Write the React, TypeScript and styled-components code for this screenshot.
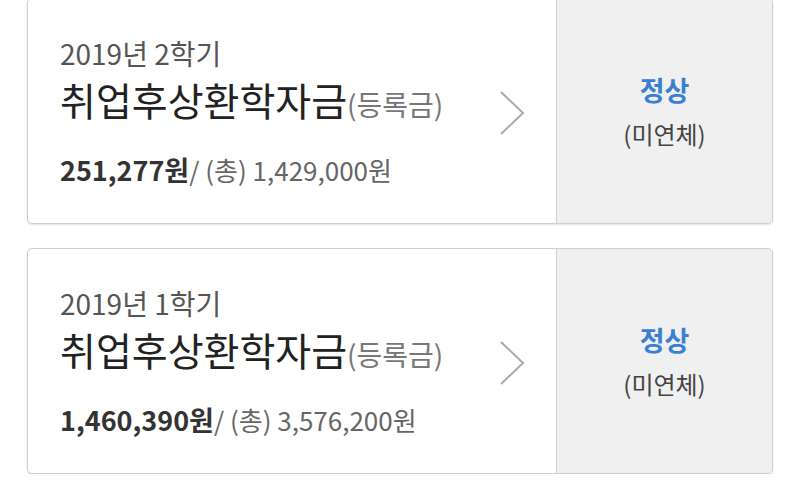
import React from 'react';
import styled, { createGlobalStyle } from 'styled-components';

const GlobalStyle = createGlobalStyle`
  html, body {
    margin: 0;
    padding: 0;
    background: #fff;
    font-family: "Noto Sans CJK KR", "Noto Sans", sans-serif;
  }
`;

const List = styled.div`
  display: flex;
  flex-direction: column;
  gap: 24px;
  padding: 0 27px;
  margin-top: -2px;
`;

const Card = styled.div`
  display: flex;
  height: 226px;
  box-sizing: border-box;
  border: 1px solid #cfcfcf;
  border-radius: 5px;
  overflow: hidden;
  box-shadow: 0 1px 2px rgba(0, 0, 0, 0.12);
  background: #fff;
`;

const Main = styled.div`
  flex: 1;
  display: flex;
  align-items: center;
  padding-left: 32px;
  padding-right: 31px;
`;

const Info = styled.div`
  flex: 1;
  display: flex;
  flex-direction: column;
`;

const Term = styled.div`
  font-size: 28px;
  line-height: 36px;
  color: #555;
`;

const Title = styled.div`
  font-size: 39px;
  line-height: 52px;
  color: #222;
  margin-top: 2px;
`;

const Sub = styled.span`
  font-size: 28px;
  color: #777;
`;

const Amount = styled.div`
  font-size: 26px;
  line-height: 36px;
  color: #666;
  margin-top: 22px;
`;

const Paid = styled.span`
  font-size: 27px;
  font-weight: 700;
  color: #333;
`;

const Chevron = styled.svg`
  width: 26px;
  height: 46px;
  flex-shrink: 0;
  margin-top: 4px;
`;

const Status = styled.div`
  width: 215px;
  flex-shrink: 0;
  border-left: 1px solid #cfcfcf;
  background: #f0f0f0;
  display: flex;
  flex-direction: column;
  align-items: center;
  justify-content: center;
  gap: 8px;
`;

const StatusLabel = styled.div`
  font-size: 27px;
  line-height: 38px;
  font-weight: 700;
  color: #3a80d0;
`;

const StatusNote = styled.div`
  font-size: 24px;
  line-height: 34px;
  color: #444;
`;

const loans = [
  { term: '2019년 2학기', paid: '251,277원', total: '1,429,000원' },
  { term: '2019년 1학기', paid: '1,460,390원', total: '3,576,200원' },
];

export default function App() {
  return (
    <>
      <GlobalStyle />
      <List>
        {loans.map((loan) => (
          <Card key={loan.term}>
            <Main>
              <Info>
                <Term>{loan.term}</Term>
                <Title>
                  취업후상환학자금<Sub>(등록금)</Sub>
                </Title>
                <Amount>
                  <Paid>{loan.paid}</Paid>/ (총) {loan.total}
                </Amount>
              </Info>
              <Chevron viewBox="0 0 26 46">
                <path d="M2 2 L24 23 L2 44" fill="none" stroke="#aaa" strokeWidth="2" />
              </Chevron>
            </Main>
            <Status>
              <StatusLabel>정상</StatusLabel>
              <StatusNote>(미연체)</StatusNote>
            </Status>
          </Card>
        ))}
      </List>
    </>
  );
}
